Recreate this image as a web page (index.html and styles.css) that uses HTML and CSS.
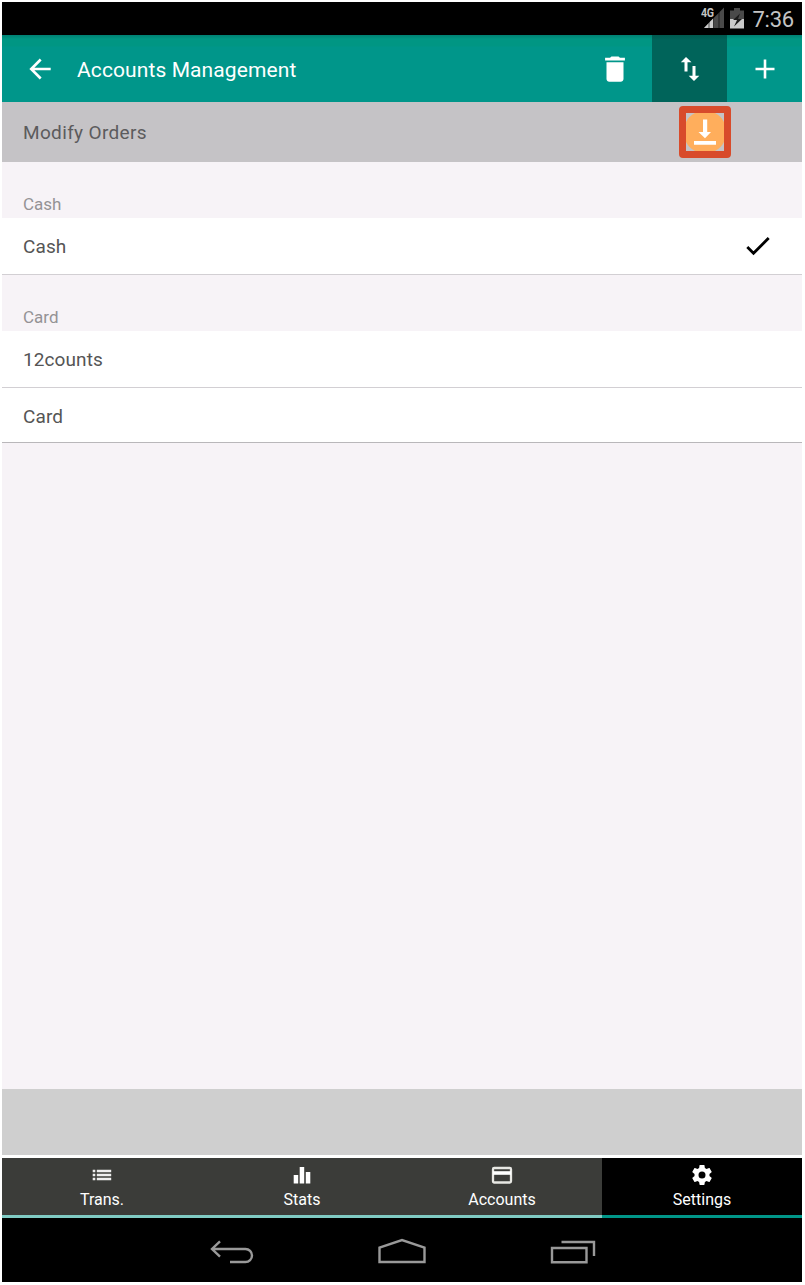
FILE: index.html
```html
<!DOCTYPE html>
<html lang="en">
<head>
<meta charset="utf-8">
<title>Accounts Management</title>
<link rel="stylesheet" href="styles.css">
</head>
<body>
<div class="screen">
  <div class="status">
    <svg class="signal" width="24" height="24" viewBox="0 0 24 24"><path d="M23 1.500V22H3z" fill="#4a4a4a"/><path d="M12.500 12V22H3z" fill="#ccc"/><path d="M8 16v6M12.500 11v11M18 6v16" stroke="#000" stroke-width="1" opacity=".6"/></svg>
    <span class="network">4G</span>
    <svg class="battery" width="14" height="21" viewBox="0 0 14 21"><path d="M0 2.500h4V0h6v2.500h4V11H0z" fill="#4a4a4a"/><path d="M0 11h14v9.500H0z" fill="#c9c9c9"/><path d="M10 5.500L3 12h4l-3 6.500 8-7.500H8z" fill="#1c1c1c"/></svg>
    <span class="clock">7:36</span>
  </div>
  <header class="appbar">
    <svg class="back" width="24" height="24" viewBox="0 0 24 24"><path d="M22.700 12H3M12.700 2.500L3.200 12l9.500 9.500" fill="none" stroke="#fff" stroke-width="2.600"/></svg>
    <h1 class="title">Accounts Management</h1>
    <div class="action"><svg width="34" height="34" viewBox="0 0 24 24"><path fill="#fff" d="M6 19c0 1.100.9 2 2 2h8c1.100 0 2-.9 2-2V7.300H6zM19 4h-3.500l-1-.8h-5l-1 .8H5v2h14z"/></svg></div>
    <div class="action active"><svg width="20" height="26" viewBox="0 0 20 26"><path fill="#fff" d="M6 1l5.500 5.300H7.500v9.200h-3V6.300H.8zM14 25l5.300-5.300h-3.800V10h-3v9.700H8.700z"/></svg></div>
    <div class="action"><svg width="20" height="20" viewBox="0 0 20 20"><path d="M10 .5v19M.5 10h19" stroke="#fff" stroke-width="2.600"/></svg></div>
  </header>
  <div class="orders">
    <span>Modify Orders</span>
    <div class="download"><svg width="38" height="38" viewBox="0 0 38 38"><path d="M9 0h20q6 3 9 9v20q-3 6-9 9H9q-6-3-9-9V9q3-6 9-9z" fill="#ffae5c"/><path d="M17 6.500h4.200V19H25L19 25.300 12.500 19H17zM8 28h22v3.700H8z" fill="#fff"/></svg></div>
  </div>
  <main class="content">
    <div class="section">Cash</div>
    <div class="row"><span>Cash</span><svg width="26" height="20" viewBox="0 0 26 20"><path d="M2.300 11l6.200 6.200L23.700 2" fill="none" stroke="#000" stroke-width="2.800"/></svg></div>
    <div class="section">Card</div>
    <div class="row"><span>12counts</span></div>
    <div class="row last"><span>Card</span></div>
  </main>
  <div class="banner"></div>
  <nav class="tabs">
    <div class="tab"><svg width="24" height="22" viewBox="0 0 24 22"><path d="M2.700 7h2.600M2.700 11h2.600M2.700 15h2.600M6.800 7h14.400M6.800 11h14.400M6.800 15h14.400" stroke="#eee" stroke-width="2.400"/></svg><span>Trans.</span></div>
    <div class="tab"><svg width="24" height="22" viewBox="0 0 24 22"><path d="M3.700 11h4.500v8.500H3.700zM9.700 3h4.500v16.500H9.700zM15.800 8h4.500v11.500h-4.500z" fill="#fff"/></svg><span>Stats</span></div>
    <div class="tab"><svg width="24" height="22" viewBox="0 0 24 22"><rect x="3" y="4" width="18" height="14.500" rx="1.200" fill="none" stroke="#e8e8e4" stroke-width="2.300"/><path d="M3 9h18" stroke="#fff" stroke-width="3.600"/></svg><span>Accounts</span></div>
    <div class="tab selected"><svg width="24" height="22" viewBox="2 1 20 22" ><path fill="#fff" d="M19.430 12.980c.04-.32.07-.64.07-.98s-.03-.66-.07-.98l2.110-1.650c.19-.15.24-.42.12-.64l-2-3.460c-.12-.22-.39-.3-.61-.22l-2.490 1c-.52-.4-1.080-.73-1.690-.98l-.38-2.650C14.460 2.180 14.250 2 14 2h-4c-.25 0-.46.18-.49.42l-.38 2.650c-.61.25-1.170.59-1.690.98l-2.490-1c-.23-.09-.49 0-.61.22l-2 3.460c-.13.22-.07.49.12.64l2.110 1.650c-.04.32-.07.65-.07.98s.03.66.07.98l-2.110 1.650c-.19.15-.24.42-.12.64l2 3.460c.12.22.39.3.61.22l2.490-1c.52.4 1.080.73 1.690.98l.38 2.650c.03.24.24.42.49.42h4c.25 0 .46-.18.49-.42l.38-2.650c.61-.25 1.170-.59 1.690-.98l2.490 1c.23.09.49 0 .61-.22l2-3.460c.12-.22.07-.49-.12-.64zM12 15.500a3.500 3.500 0 1 1 0-7 3.500 3.500 0 0 1 0 7z"/></svg><span>Settings</span></div>
  </nav>
  <div class="sysnav">
    <svg width="46" height="28" viewBox="0 0 46 28"><path d="M4 11h33.500a6.500 6.500 0 0 1 0 13H22M12 3.300L4 11l8 7.700" fill="none" stroke="#999" stroke-width="2.400"/></svg>
    <svg width="50" height="28" viewBox="0 0 50 28"><path d="M2.500 24V9.500L25 2l22.500 7.500V24z" fill="none" stroke="#999" stroke-width="2.400"/></svg>
    <svg width="46" height="28" viewBox="0 0 46 28"><path d="M2 10h34.500v14.200H2zM11.500 4H44v14" fill="none" stroke="#999" stroke-width="2.400"/></svg>
  </div>
</div>
</body>
</html>
```
FILE: styles.css
```css
* { box-sizing: border-box; }
body { margin: 0; background: #fff; font-family: Roboto, sans-serif; }
svg { display: block; flex: none; }
.screen { width: 800px; height: 1280px; margin: 2px; display: flex; flex-direction: column; }
.status { height: 33px; background: #000; display: flex; align-items: center; justify-content: flex-end; padding-right: 8px; position: relative; color: #c4c4c4; }
.signal { margin: -2px 5px 0 0; }
.network { position: absolute; right: 88px; top: 4px; font-size: 12.5px; line-height: 14px; font-weight: 700; letter-spacing: -.6px; transform: scaleX(.85); }
.battery { margin-right: 8px; margin-top: -1px; }
.clock { font-size: 22px; line-height: 33px; padding-top: 2px; letter-spacing: -.2px; }
.appbar { height: 67px; display: flex; align-items: center; padding-left: 26px; background: linear-gradient(#008073, #009683 4px, #009683 11px, #00968a 12px); }
.title { flex: 1; margin: 3px 0 0 25px; color: #fff; font-size: 21px; font-weight: 400; line-height: 28px; letter-spacing: .1px; }
.action { width: 75px; height: 67px; display: flex; align-items: center; justify-content: center; }
.action.active { background: linear-gradient(#00594f, #00645a 5px); }
.orders { height: 60px; background: #c5c3c6; display: flex; align-items: center; justify-content: space-between; padding: 0 71px 0 21px; color: #5c5b5d; font-size: 19px; letter-spacing: .35px; }
.download { width: 52px; height: 52px; border: 7px solid #d84b2b; border-radius: 4px; background: #c5c3c6; }
.content { flex: 1; background: #f7f3f7; }
.section { height: 56px; padding: 32px 21px 0; font-size: 17px; line-height: 20px; color: #949295; letter-spacing: 0; }
.row { height: 57px; background: #fff; border-bottom: 1px solid #d2cfd3; display: flex; align-items: center; justify-content: space-between; padding: 0 31px 0 21px; font-size: 19px; color: #555; letter-spacing: .1px; }
.row.last { height: 55px; border-color: #b9b7ba; padding-top: 2px; }
.banner { height: 66px; background: #cfcfcf; }
.tabs { height: 63px; padding-top: 3px; background: #fff; display: grid; grid-template-columns: repeat(4, 1fr); }
.tab { background: #3b3c39; border-bottom: 3px solid #80cbc4; color: #fff; display: flex; flex-direction: column; align-items: center; padding-top: 6px; font-size: 16px; line-height: 20px; letter-spacing: 0; }
.tab span { margin-top: 4px; }
.tab.selected { background: #000; border-color: #009688; }
.sysnav { height: 64px; background: #000; display: flex; align-items: center; justify-content: center; gap: 123px; padding-top: 4px; }
```
